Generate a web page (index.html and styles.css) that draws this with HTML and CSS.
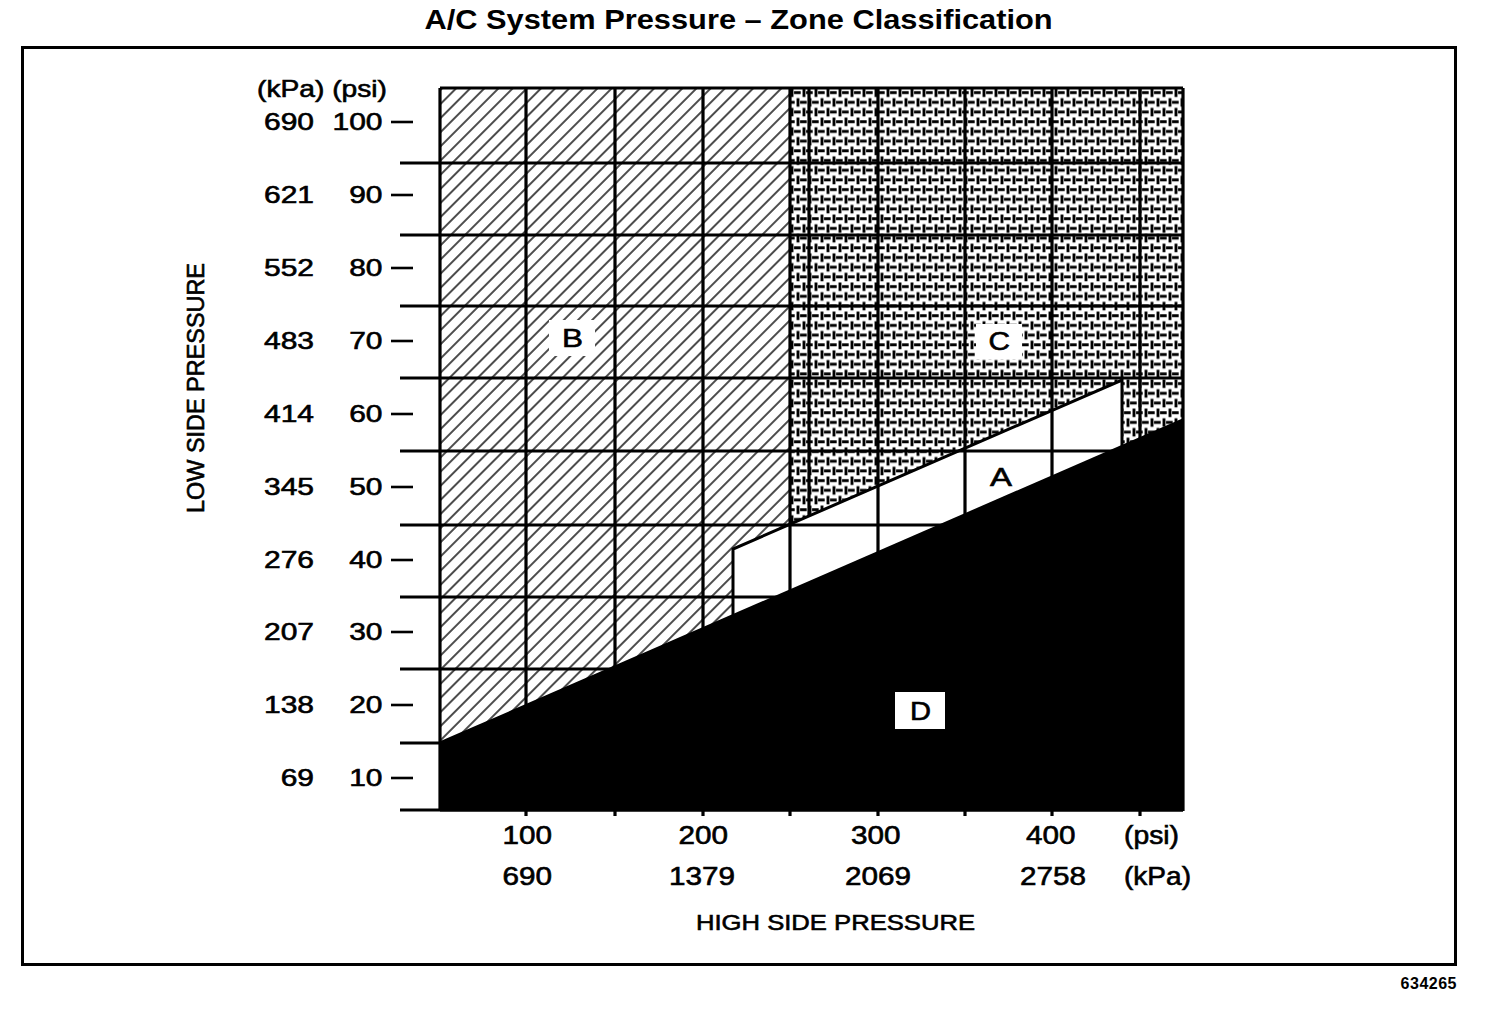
FILE: index.html
```html
<!DOCTYPE html>
<html lang="en">
<head>
<meta charset="utf-8">
<title>A/C System Pressure – Zone Classification</title>
<link rel="stylesheet" href="styles.css">
</head>
<body>
<div class="page">
  <h1 class="title"><span class="title-text">A/C System Pressure – Zone Classification</span></h1>
  <div class="frame">
    <svg class="chart" viewBox="24 49 1430 914" width="1430" height="914" xmlns="http://www.w3.org/2000/svg">
      <defs>
        <pattern id="hatch" patternUnits="userSpaceOnUse" width="10" height="10" patternTransform="rotate(45)">
          <line x1="5" y1="-1" x2="5" y2="11" class="hatch-line"/>
        </pattern>
        <pattern id="weave" patternUnits="userSpaceOnUse" x="790" y="88" width="12" height="19.4">
          <path class="weave-mark" d="M2 0.5V8.9M4.1 4.7H10.7M8 10.2V18.6M10.1 14.4H12M0 14.4H4.7"/>
        </pattern>
      </defs>

      <!-- zone B (diagonal hatch) -->
      <polygon class="zone-b" points="440,88 809,88 809,516 733,549 733,616 440,743"/>
      <!-- zone C (weave) -->
      <polygon class="zone-c-bg" points="790,88 1183,88 1183,420 1122,446.5 1122,380 790,524"/>
      <polygon class="zone-c" points="790,88 1183,88 1183,420 1122,446.5 1122,380 790,524"/>
      <line class="grid" x1="809" y1="88" x2="809" y2="516"/>
      <!-- zone A (white) -->
      <polygon class="zone-a" points="733,549 1122,380 1122,446.5 733,616"/>

      <!-- grid -->
      <g class="grid">
        <line x1="440" y1="88" x2="1183" y2="88"/>
        <line x1="400" y1="163" x2="1183" y2="163"/>
        <line x1="400" y1="235" x2="1183" y2="235"/>
        <line x1="400" y1="306" x2="1183" y2="306"/>
        <line x1="400" y1="378" x2="1183" y2="378"/>
        <line x1="400" y1="451" x2="1183" y2="451"/>
        <line x1="400" y1="525" x2="1183" y2="525"/>
        <line x1="400" y1="597" x2="1183" y2="597"/>
        <line x1="400" y1="669" x2="1183" y2="669"/>
        <line x1="400" y1="743" x2="1183" y2="743"/>
        <line x1="400" y1="810" x2="1183" y2="810"/>
        <line x1="440" y1="88" x2="440" y2="810"/>
        <line x1="526" y1="88" x2="526" y2="816"/>
        <line x1="615" y1="88" x2="615" y2="816"/>
        <line x1="703" y1="88" x2="703" y2="816"/>
        <line x1="790" y1="88" x2="790" y2="816"/>
        <line x1="878" y1="88" x2="878" y2="816"/>
        <line x1="965" y1="88" x2="965" y2="816"/>
        <line x1="1052" y1="88" x2="1052" y2="816"/>
        <line x1="1140" y1="88" x2="1140" y2="816"/>
        <line x1="1183" y1="88" x2="1183" y2="811"/>
      </g>

      <!-- zone D (black) -->
      <polygon class="zone-d" points="440,743 1183,420 1183,811.5 440,811.5"/>

      <!-- zone A outline -->
      <polyline class="outline" points="733,616 733,549 1122,380 1122,447"/>
      <line class="outline" x1="440" y1="743" x2="1183" y2="420"/>

      <!-- y axis ticks -->
      <g class="ticks">
        <line x1="391" y1="122" x2="413" y2="122"/>
        <line x1="391" y1="195" x2="413" y2="195"/>
        <line x1="391" y1="268" x2="413" y2="268"/>
        <line x1="391" y1="341" x2="413" y2="341"/>
        <line x1="391" y1="414" x2="413" y2="414"/>
        <line x1="391" y1="487" x2="413" y2="487"/>
        <line x1="391" y1="560" x2="413" y2="560"/>
        <line x1="391" y1="632" x2="413" y2="632"/>
        <line x1="391" y1="705" x2="413" y2="705"/>
        <line x1="391" y1="778" x2="413" y2="778"/>
      </g>

      <!-- y axis labels -->
      <g class="ylab">
        <text x="257" y="97" textLength="130" lengthAdjust="spacingAndGlyphs">(kPa) (psi)</text>
        <text x="264" y="130" textLength="50" lengthAdjust="spacingAndGlyphs">690</text>
        <text x="264" y="203" textLength="50" lengthAdjust="spacingAndGlyphs">621</text>
        <text x="264" y="276" textLength="50" lengthAdjust="spacingAndGlyphs">552</text>
        <text x="264" y="349" textLength="50" lengthAdjust="spacingAndGlyphs">483</text>
        <text x="264" y="422" textLength="50" lengthAdjust="spacingAndGlyphs">414</text>
        <text x="264" y="495" textLength="50" lengthAdjust="spacingAndGlyphs">345</text>
        <text x="264" y="568" textLength="50" lengthAdjust="spacingAndGlyphs">276</text>
        <text x="264" y="640" textLength="50" lengthAdjust="spacingAndGlyphs">207</text>
        <text x="264" y="713" textLength="50" lengthAdjust="spacingAndGlyphs">138</text>
        <text x="280.7" y="786" textLength="33.3" lengthAdjust="spacingAndGlyphs">69</text>
        <text x="332.5" y="130" textLength="50" lengthAdjust="spacingAndGlyphs">100</text>
        <text x="349.2" y="203" textLength="33.3" lengthAdjust="spacingAndGlyphs">90</text>
        <text x="349.2" y="276" textLength="33.3" lengthAdjust="spacingAndGlyphs">80</text>
        <text x="349.2" y="349" textLength="33.3" lengthAdjust="spacingAndGlyphs">70</text>
        <text x="349.2" y="422" textLength="33.3" lengthAdjust="spacingAndGlyphs">60</text>
        <text x="349.2" y="495" textLength="33.3" lengthAdjust="spacingAndGlyphs">50</text>
        <text x="349.2" y="568" textLength="33.3" lengthAdjust="spacingAndGlyphs">40</text>
        <text x="349.2" y="640" textLength="33.3" lengthAdjust="spacingAndGlyphs">30</text>
        <text x="349.2" y="713" textLength="33.3" lengthAdjust="spacingAndGlyphs">20</text>
        <text x="349.2" y="786" textLength="33.3" lengthAdjust="spacingAndGlyphs">10</text>
      </g>

      <!-- x axis labels -->
      <g class="xlab">
        <text x="502.5" y="844" textLength="49.5" lengthAdjust="spacingAndGlyphs">100</text>
        <text x="678.5" y="844" textLength="49.5" lengthAdjust="spacingAndGlyphs">200</text>
        <text x="851" y="844" textLength="49.5" lengthAdjust="spacingAndGlyphs">300</text>
        <text x="1026" y="844" textLength="49.5" lengthAdjust="spacingAndGlyphs">400</text>
        <text x="1124" y="844" textLength="55" lengthAdjust="spacingAndGlyphs">(psi)</text>
        <text x="502.5" y="885" textLength="49.5" lengthAdjust="spacingAndGlyphs">690</text>
        <text x="669" y="885" textLength="66" lengthAdjust="spacingAndGlyphs">1379</text>
        <text x="845" y="885" textLength="66" lengthAdjust="spacingAndGlyphs">2069</text>
        <text x="1020" y="885" textLength="66" lengthAdjust="spacingAndGlyphs">2758</text>
        <text x="1124" y="885" textLength="67" lengthAdjust="spacingAndGlyphs">(kPa)</text>
      </g>

      <text class="axis-title" x="696" y="930" textLength="279" lengthAdjust="spacingAndGlyphs">HIGH SIDE PRESSURE</text>
      <text class="axis-title ytitle" transform="translate(204 513) rotate(-90)" x="0" y="0" textLength="250" lengthAdjust="spacingAndGlyphs">LOW SIDE PRESSURE</text>

      <!-- zone letters -->
      <rect class="tag" x="549" y="320" width="46" height="36"/>
      <text class="zone-letter" x="562" y="347" textLength="21" lengthAdjust="spacingAndGlyphs">B</text>
      <rect class="tag" x="976" y="324" width="46" height="35"/>
      <text class="zone-letter" x="988.5" y="350" textLength="21.5" lengthAdjust="spacingAndGlyphs">C</text>
      <text class="zone-letter" x="990" y="486" textLength="22" lengthAdjust="spacingAndGlyphs">A</text>
      <rect class="tag" x="895" y="692" width="50" height="37"/>
      <text class="zone-letter" x="910" y="720" textLength="21" lengthAdjust="spacingAndGlyphs">D</text>
    </svg>
  </div>
  <div class="ref">634265</div>
</div>
</body>
</html>
```

FILE: styles.css
```css
html, body {
  margin: 0;
  padding: 0;
  background: #fff;
}

body {
  font-family: "Liberation Sans", Arial, sans-serif;
  color: #000;
}

.page {
  width: 1436px;
  margin-left: 21px;
}

.title {
  margin: 6px 0 12px;
  font-size: 28px;
  line-height: 28px;
  font-weight: bold;
  text-align: center;
}

.title-text {
  display: inline-block;
  transform: scaleX(1.1);
  transform-origin: center;
}

.frame {
  box-sizing: border-box;
  width: 1436px;
  height: 920px;
  border: 3px solid #000;
}

.chart {
  display: block;
}

.ref {
  margin-top: 10px;
  font-size: 16px;
  line-height: 16px;
  font-weight: bold;
  letter-spacing: 0.5px;
  text-align: right;
}

.hatch-line {
  stroke: #000;
  stroke-width: 1.4;
}

.weave-mark {
  stroke: #000;
  stroke-width: 2.9;
  fill: none;
}

.zone-b {
  fill: url(#hatch);
}

.zone-c-bg {
  fill: #fff;
}

.zone-c {
  fill: url(#weave);
}

.zone-a {
  fill: #fff;
}

.zone-d {
  fill: #000;
}

.grid line,
line.grid {
  stroke: #000;
  stroke-width: 3.2;
}

.outline {
  stroke: #000;
  stroke-width: 3;
  fill: none;
}

.ticks line {
  stroke: #000;
  stroke-width: 2.6;
}

.chart text {
  font-family: "Liberation Sans", Arial, sans-serif;
  fill: #000;
  stroke: #000;
  stroke-width: 0.6;
}

.ylab text {
  font-size: 24px;
}

.xlab text {
  font-size: 25px;
}

.axis-title {
  font-size: 22px;
}

.ytitle {
  font-size: 23px;
}

.tag {
  fill: #fff;
}

.zone-letter {
  font-size: 25px;
}
```
